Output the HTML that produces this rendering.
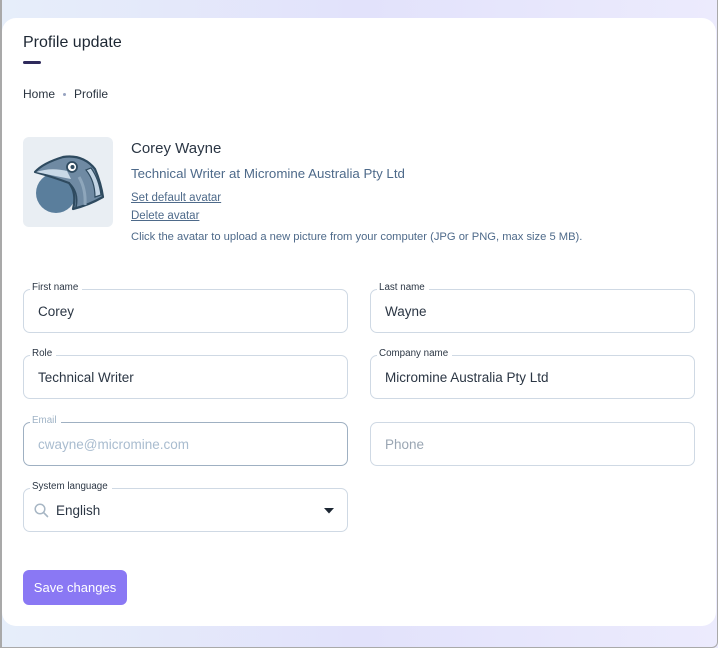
<!DOCTYPE html>
<html><head><meta charset="utf-8"><style>
*{box-sizing:border-box;margin:0;padding:0}
html,body{width:718px;height:648px;overflow:hidden}
body{font-family:"Liberation Sans",sans-serif;background:linear-gradient(90deg,#e6eefa,#e2e2fb 50%,#ecebfd);position:relative;color:#1d2733}
.frame{position:absolute;left:0;top:0;width:718px;height:648px;border-left:2px solid #a9a9a9;border-right:1px solid #a9a9a9;border-bottom:1px solid #a9a9a9;border-bottom-right-radius:6px}
.card{position:absolute;left:2px;top:18px;width:714px;height:608px;background:#fff;border-radius:14px}
h1{position:absolute;left:21px;top:16px;font-size:16px;font-weight:normal;color:#1d2733}
.bar{position:absolute;left:21px;top:43px;width:18px;height:3px;border-radius:2px;background:#2f2a5c}
.bc{position:absolute;left:21px;top:69px;font-size:12px;color:#2a3440}
.bc .dot{display:inline-block;width:3px;height:3px;border-radius:50%;background:#98a3c0;margin:0 8px 2px}
.av{position:absolute;left:21px;top:119px;width:90px;height:90px;background:#e9eef3;border-radius:6px}
.name{position:absolute;left:129px;top:122px;font-size:15px;color:#2b3644}
.job{position:absolute;left:129px;top:148px;font-size:13.3px;color:#4e6a8a}
.lk{position:absolute;left:129px;font-size:11.5px;color:#4e6a8a;text-decoration:underline}
.hint{position:absolute;left:129px;top:213px;font-size:11.2px;color:#4e6a8a}
.f{position:absolute;width:325px;height:44px;border:1px solid #cfd9e4;border-radius:7px}
.f label{position:absolute;left:6px;top:-8px;background:#fff;padding:0 4px 0 2px;font-size:9.8px;color:#2b3644}
.f span{position:absolute;left:14px;top:14px;font-size:13.5px;color:#2b3644}
.f .ph{color:#9aa6b3}
.f.em{border-color:#9fb0c2}
.f.em label{color:#9fb3c6}
.f.em span{color:#a9bccf}
.btn{position:absolute;left:21px;top:552px;width:104px;height:35px;border-radius:6px;background:#8a78f4;color:#fff;font-size:13px;text-align:center;line-height:35px}
</style></head><body>
<div class="frame"></div>
<div class="card">
<h1>Profile update</h1>
<div class="bar"></div>
<div class="bc">Home<span class="dot"></span>Profile</div>
<div class="av"><svg width="90" height="90" viewBox="0 0 90 90">
<circle cx="33" cy="56" r="20" fill="#5a7e9c"/>
<path d="M12 35 Q20 26 40 20 Q60 17 72 32 Q78 46 80 60 Q66 68 50 72 Q54 56 46 46 Q30 40 12 35Z" fill="#6f8aa3" stroke="#2e4a5f" stroke-width="2.2" stroke-linejoin="round"/>
<path d="M13 35 Q28 30 44 34 L48 42 Q32 39 13 35Z" fill="#c9d9e7"/>
<path d="M63 33 Q72 44 72 60 L78 58 Q76 42 68 31Z" fill="#c2d4e4" stroke="#2e4a5f" stroke-width="1.2"/>
<path d="M46 46 Q56 55 53 70" stroke="#2e4a5f" stroke-width="1.6" fill="none"/>
<path d="M56 40 Q63 52 62 68" stroke="#8ea6bb" stroke-width="3" fill="none"/>
<circle cx="49" cy="30" r="5" fill="#fff" stroke="#2e4a5f" stroke-width="1.8"/>
<circle cx="49.5" cy="30" r="2" fill="#2e4a5f"/>
</svg></div>
<div class="name">Corey Wayne</div>
<div class="job">Technical Writer at Micromine Australia Pty Ltd</div>
<div class="lk" style="top:174px">Set default avatar</div>
<div class="lk" style="top:192px">Delete avatar</div>
<div class="hint">Click the avatar to upload a new picture from your computer (JPG or PNG, max size 5 MB).</div>

<div class="f" style="left:21px;top:271px"><label>First name</label><span>Corey</span></div>
<div class="f" style="left:368px;top:271px"><label>Last name</label><span>Wayne</span></div>
<div class="f" style="left:21px;top:337px"><label>Role</label><span>Technical Writer</span></div>
<div class="f" style="left:368px;top:337px"><label>Company name</label><span>Micromine Australia Pty Ltd</span></div>
<div class="f em" style="left:21px;top:404px"><label>Email</label><span>cwayne@micromine.com</span></div>
<div class="f" style="left:368px;top:404px"><span class="ph">Phone</span></div>
<div class="f" style="left:21px;top:470px"><label>System language</label>
<svg style="position:absolute;left:10px;top:14px" width="15" height="15" viewBox="0 0 15 15"><circle cx="6" cy="6" r="4.8" fill="none" stroke="#a7b6c4" stroke-width="1.5"/><path d="M9.6 9.6L13.5 13.5" stroke="#a7b6c4" stroke-width="1.6" stroke-linecap="round"/></svg>
<span style="left:32px">English</span>
<svg style="position:absolute;left:300px;top:19px" width="10" height="6" viewBox="0 0 10 6"><path d="M0 0H10L5 5.5Z" fill="#1d2733"/></svg>
</div>
<div class="btn">Save changes</div>
</div>
</body></html>
